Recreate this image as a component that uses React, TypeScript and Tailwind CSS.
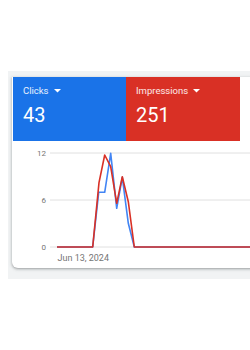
import React from "react";

const blue: [number, number][] = [
  [45, 106], [80.7, 106], [86.7, 51.3], [92.7, 51.3], [98.7, 12.3], [104.7, 67.3], [110.3, 36.3], [116.3, 82.3], [122.3, 106], [240, 106],
];
const red: [number, number][] = [
  [45, 106], [80.7, 106], [87, 41.7], [92.7, 14], [98.7, 25.7], [104.7, 62.3], [110.3, 35.7], [116.3, 60.7], [122.3, 106], [240, 106],
];

function pts(p: [number, number][]) {
  return p.map(([x, y]) => `${x},${y}`).join(" ");
}

function Caret() {
  return (
    <svg width="7" height="4" viewBox="0 0 7 4" className="ml-[5px]">
      <path d="M0 0 L7 0 L3.5 3.5 Z" fill="white" />
    </svg>
  );
}

export default function App() {
  return (
    <div
      className="w-[250px] h-[350px] bg-white overflow-hidden pt-[71px]"
      style={{ fontFamily: "Roboto, 'Liberation Sans', sans-serif" }}
    >
      <div className="ml-[8px] h-[208px] bg-[#f1f3f4] pt-[6px] pl-[4px] overflow-hidden">
        <div className="w-[260px] h-[191px] bg-white rounded-bl-[6px] shadow-[0_1px_2px_rgba(60,64,67,0.3),0_1px_3px_1px_rgba(60,64,67,0.15)] overflow-hidden pl-[1px]">
          <div className="flex h-[64px]">
            <div className="w-[113px] bg-[#1a73e8] text-white pl-[10px] pt-[7px]">
              <div className="flex items-center text-[9.5px] leading-[14px] text-white/90">
                Clicks
                <Caret />
              </div>
              <div className="text-[20px] leading-[24px] mt-[5px]">43</div>
            </div>
            <div className="w-[114px] bg-[#d93025] text-white pl-[10px] pt-[7px]">
              <div className="flex items-center text-[9.5px] leading-[14px] text-white/90">
                Impressions
                <Caret />
              </div>
              <div className="text-[20px] leading-[24px] mt-[5px]">251</div>
            </div>
          </div>
          <svg width="260" height="127" className="block -ml-[1px]">
            <line x1="38" y1="12" x2="260" y2="12" stroke="#e0e0e0" strokeWidth="1" />
            <line x1="38" y1="59" x2="260" y2="59" stroke="#e0e0e0" strokeWidth="1" />
            <line x1="38" y1="106" x2="260" y2="106" stroke="#e0e0e0" strokeWidth="1" />
            <text x="34" y="15" textAnchor="end" fontSize="8" fill="#757575">12</text>
            <text x="34" y="62" textAnchor="end" fontSize="8" fill="#757575">6</text>
            <text x="34" y="109" textAnchor="end" fontSize="8" fill="#757575">0</text>
            <text x="45.5" y="119.5" fontSize="9" fill="#757575">Jun 13, 2024</text>
            <polyline points={pts(blue)} fill="none" stroke="#4285f4" strokeWidth="1.6" strokeLinejoin="round" />
            <polyline points={pts(red)} fill="none" stroke="#d93025" strokeWidth="1.6" strokeLinejoin="round" />
          </svg>
        </div>
      </div>
    </div>
  );
}
